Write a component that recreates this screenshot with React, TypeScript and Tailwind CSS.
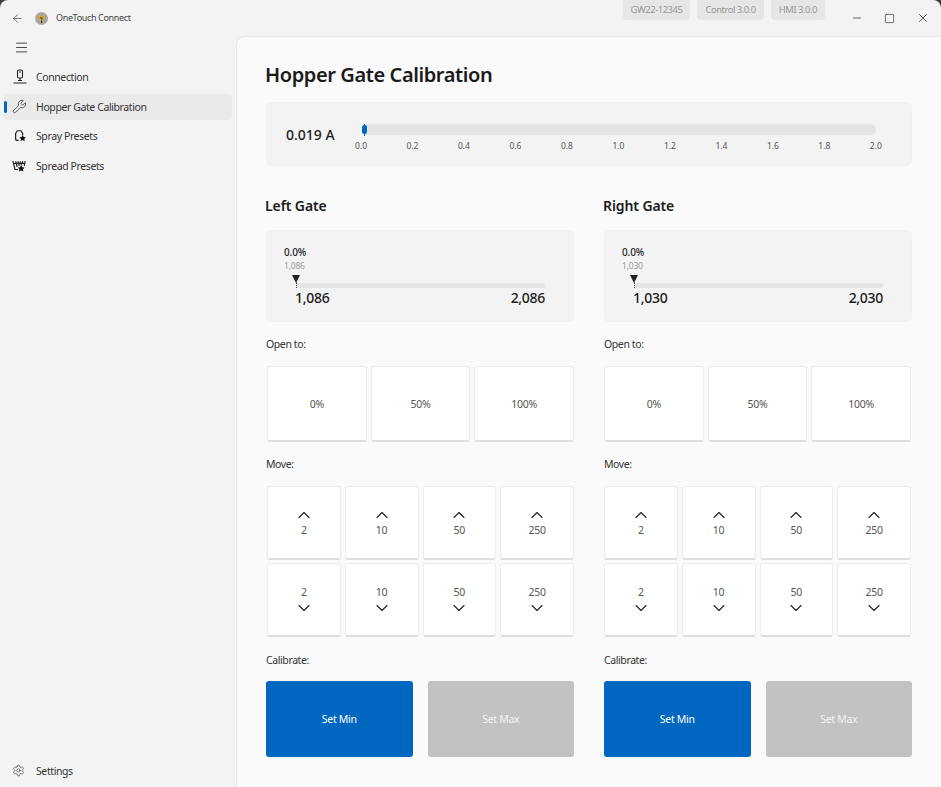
import { ArrowLeft, ChevronDown, ChevronUp, Menu, Settings, Wrench, X, Minus, Square } from "lucide-react";

function ConnectionIcon() {
  return (
    <svg width="16" height="16" viewBox="0 0 16 16" fill="none" stroke="#222" strokeWidth="1.1">
      <rect x="5.500" y="1" width="5" height="8" rx="1.200" />
      <path d="M7 3h2M8 9v2.500M6 11.500h4M1.500 14h13" />
    </svg>
  );
}

function SprayIcon() {
  return (
    <svg width="14" height="14" viewBox="0 0 16 16" fill="none" stroke="#222" strokeWidth="1.400" className="ml-[1px]">
      <path d="M6.500 13H4.500A1.500 1.500 0 0 1 3 11.500V5l2-3h4l2 3v2" />
      <path d="M11 6.800l1.200 2.400 2.600.3-1.900 1.800.5 2.600-2.400-1.300-2.400 1.300.5-2.600-1.900-1.800 2.600-.3z" fill="#111" stroke="none" />
    </svg>
  );
}

function SpreadIcon() {
  return (
    <svg width="14" height="14" viewBox="0 0 16 16" fill="none" stroke="#222" strokeWidth="1.400">
      <path d="M1 2.500l2.500 9.500h3.500M15 2.500l-1 5.500M2 5h12M4.500 2.500v2.500M7 2.500v2.500M9.500 2.500v2.500M12 2.500v2.500M5 5l.8 4M8 5v3M11 5l-.5 2" />
      <path d="M10.500 6.800l1.300 2.500 2.700.4-2 1.900.5 2.700-2.500-1.300-2.500 1.300.5-2.700-2-1.900 2.700-.4z" fill="#111" stroke="none" />
    </svg>
  );
}

function Logo() {
  return (
    <svg width="13" height="13" viewBox="0 0 13 13">
      <circle cx="6.500" cy="6.500" r="6.500" fill="#a9a79c" />
      <path d="M3 4.500l3-1 4 .5-1.500 3-1 .5-.5 3H6l-.5-2.500z" fill="#d9a61e" />
      <path d="M5 5l3 1-1.500 1.500zM6 8.500h1.200v2.500H6z" fill="#33301f" />
    </svg>
  );
}

function NavItem({ icon, label, active }: { icon: React.ReactNode; label: string; active?: boolean }) {
  return (
    <div className={`relative mx-1 flex h-[26.500px] items-center rounded pl-2 ${active ? "bg-[#eaeaea]" : ""}`}>
      {active && <span className="absolute top-[7px] left-0 h-3 w-[2.500px] rounded-full bg-[#0067c0]" />}
      <span className="flex w-[24px] items-center justify-start">{icon}</span>
      <span className="pt-[2px] text-[10.500px] tracking-[-0.4px] text-[#333]">{label}</span>
    </div>
  );
}

function Pill({ label }: { label: string }) {
  return <div className="flex h-5 items-center rounded-b bg-[#e6e6e6] px-[8px] text-[9.500px] tracking-[-0.5px] text-[#969696]">{label}</div>;
}

function CardButton({ children, className = "" }: { children: React.ReactNode; className?: string }) {
  return (
    <div className={`flex flex-col items-center justify-center rounded-[3px] border border-b-2 border-[#ececec] border-b-[#dedede] bg-white text-[10.500px] tracking-[-0.2px] text-[#555] ${className}`}>
      {children}
    </div>
  );
}

function MoveButton({ value, up }: { value: number; up?: boolean }) {
  return (
    <CardButton className={`h-[74px] ${up ? "" : "pb-[2px]"}`}>
      {up && <ChevronUp size={20} strokeWidth={1.300} color="#222" className="-my-[4px] mb-[-2px]" />}
      <span className="leading-[14px]">{value}</span>
      {!up && <ChevronDown size={20} strokeWidth={1.300} color="#222" className="-my-[4px] mt-[-2px] translate-y-[1px]" />}
    </CardButton>
  );
}

function Gate({ name, min, max, inset }: { name: string; min: string; max: string; inset: string }) {
  const moves = [2, 10, 50, 250];
  return (
    <div className="flex flex-col">
      <h2 className="h-[36px] pt-[1px] -ml-px text-[14px] leading-[24px] font-semibold tracking-[-0.1px] text-[#1b1b1b]">{name}</h2>
      <div className="mt-[1px] flex h-[92px] flex-col rounded-md border border-[#f0f0f0] bg-[#f3f3f3] pt-[14px] pr-[28px] pl-[17px]">
        <span className="text-[10px] leading-[14px] font-medium tracking-[-0.1px] text-[#222]">0.0%</span>
        <span className="text-[8.500px] leading-[13px] tracking-[-0.2px] text-[#999]">{min}</span>
        <div className="relative mt-[6px] ml-[12px] h-[5px] translate-y-[5px] rounded-full bg-[#e4e4e4]">
          <span className="absolute -top-[8px] -left-[4px] h-0 w-0 border-x-4 border-t-[8px] border-x-transparent border-t-[#222]" />
          <span className="absolute -top-[1px] -left-[0.500px] h-[6px] border-l border-dotted border-[#555]" />
        </div>
        <div className="mt-[5px] ml-[11px] flex justify-between text-[14px] leading-[20px] font-medium tracking-[-0.3px] text-[#1b1b1b]">
          <span>{min}</span>
          <span>{max}</span>
        </div>
      </div>

      <p className="mt-[14px] h-[30px] text-[10.500px] leading-[16px] tracking-[-0.4px] text-[#333]">Open to:</p>
      <div className={`grid h-[76px] grid-cols-3 gap-[4px] ${inset}`}>
        <CardButton className="pt-[2px]">0%</CardButton>
        <CardButton className="pt-[2px]">50%</CardButton>
        <CardButton className="pt-[2px]">100%</CardButton>
      </div>

      <p className="mt-[14px] h-[30px] text-[10.500px] leading-[16px] tracking-[-0.4px] text-[#333]">Move:</p>
      <div className={`grid grid-cols-4 gap-x-[4px] gap-y-[3px] ${inset}`}>
        {moves.map((m) => (
          <MoveButton key={`u${m}`} value={m} up />
        ))}
        {moves.map((m) => (
          <MoveButton key={`d${m}`} value={m} />
        ))}
      </div>

      <p className="mt-[15px] h-[29px] text-[10.500px] leading-[16px] tracking-[-0.4px] text-[#333]">Calibrate:</p>
      <div className="grid h-[76px] grid-cols-2 gap-[15px]">
        <div className="flex items-center justify-center rounded-[3px] bg-[#0067c0] pt-[2px] text-[10.500px] tracking-[-0.3px] text-white">Set Min</div>
        <div className="flex items-center justify-center rounded-[3px] bg-[#c2c2c2] pt-[2px] text-[10.500px] tracking-[-0.3px] text-[#f3f3f3]">Set Max</div>
      </div>
    </div>
  );
}

export default function App() {
  const ticks = ["0.0", "0.2", "0.4", "0.6", "0.8", "1.0", "1.2", "1.4", "1.6", "1.8", "2.0"];
  return (
    <div className="h-[787px] w-[941px] overflow-hidden bg-[#3c3c3c] font-['Noto_Sans',sans-serif]">
      <div className="flex h-full flex-col overflow-hidden rounded-t-lg bg-[#f3f3f3]">
        <header className="flex h-[36px] shrink-0 items-center">
          <ArrowLeft size={13} strokeWidth={1.300} color="#444" className="ml-[11px]" />
          <span className="ml-[11px]"><Logo /></span>
          <span className="ml-[8px] text-[9px] tracking-[-0.350px] text-[#444]">OneTouch Connect</span>
          <div className="ml-auto flex gap-[7px] self-start">
            <Pill label="GW22-12345" />
            <Pill label="Control 3.0.0" />
            <Pill label="HMI 3.0.0" />
          </div>
          <div className="ml-[26px] flex w-[90px] items-center justify-between pr-[11px]">
            <Minus size={12} strokeWidth={1.400} color="#222" />
            <Square size={11} strokeWidth={1.400} color="#222" />
            <X size={14} strokeWidth={1.300} color="#222" />
          </div>
        </header>

        <div className="flex min-h-0 flex-1">
          <aside className="flex w-[236px] shrink-0 flex-col pb-[3px]">
            <div className="flex h-[22px] items-center pl-[14px]">
              <Menu size={15} strokeWidth={1.300} color="#222" />
            </div>
            <div className="mt-[6px] flex flex-col gap-[3px]">
              <NavItem icon={<ConnectionIcon />} label="Connection" />
              <NavItem icon={<Wrench size={15} strokeWidth={1.100} color="#222" />} label="Hopper Gate Calibration" active />
              <NavItem icon={<SprayIcon />} label="Spray Presets" />
              <NavItem icon={<SpreadIcon />} label="Spread Presets" />
            </div>
            <div className="mt-auto">
              <NavItem icon={<Settings size={13} strokeWidth={1.200} color="#333" />} label="Settings" />
            </div>
          </aside>

          <main className="min-w-0 flex-1 rounded-tl-lg border-t border-l border-[#e8e8e8] bg-[#fafafa] pt-[23px] pr-[29px] pl-[29px]">
            <h1 className="-ml-px text-[20px] leading-[30px] font-semibold tracking-[-0.4px] text-[#1b1b1b]">Hopper Gate Calibration</h1>
            <section className="mt-[12px] flex h-[64px] items-center rounded-md border border-[#f0f0f0] bg-[#f3f3f3] pr-[29px] pl-[19px]">
              <span className="w-[69px] text-[14px] font-medium text-[#1b1b1b]">0.019 A</span>
              <div className="flex-1 pt-[7px]">
                <div className="relative mr-[6px] ml-[7px] h-[11px] rounded-full bg-[#e4e4e4]">
                  <span className="absolute top-0 left-[-0.500px] h-[12px] w-[1px] translate-x-[2px] bg-[#0067c0]" />
                  <span className="absolute top-[1px] left-[-0.500px] h-[9px] w-[5px] rounded-full bg-[#0067c0]" />
                </div>
                <div className="mt-[5px] flex justify-between text-[8.500px] leading-[12px] text-[#555]">
                  {ticks.map((t) => (
                    <span key={t}>{t}</span>
                  ))}
                </div>
              </div>
            </section>
            <div className="mt-[27px] grid grid-cols-2 gap-[30px]">
              <Gate name="Left Gate" min="1,086" max="2,086" inset="pl-[1px]" />
              <Gate name="Right Gate" min="1,030" max="2,030" inset="pr-[1px]" />
            </div>
          </main>
        </div>
      </div>
    </div>
  );
}
